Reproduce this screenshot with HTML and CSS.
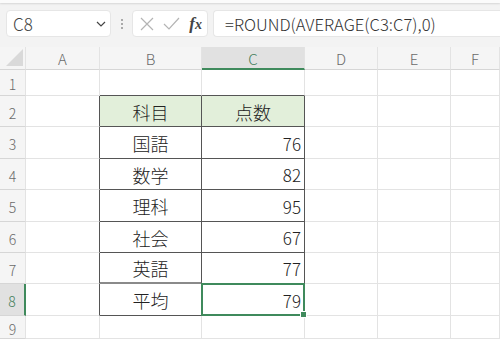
FILE: index.html
```html
<!DOCTYPE html>
<html lang="ja">
<head>
    <meta charset="UTF-8">
    <title>ROUND AVERAGE</title>
    <link rel="stylesheet" href="styles.css">
</head>
<body>
    <div class="toolbar-edge"></div>

    <!-- barra de formula -->
    <div class="formula-bar">
        <div class="name-box">
            <span>C8</span>
            <svg class="chevron" width="10" height="6" viewBox="0 0 10 6"><path d="M1 1 L5 5 L9 1" fill="none" stroke="#444" stroke-width="1.2"/></svg>
        </div>
        <div class="dots"><i></i><i></i><i></i></div>
        <div class="fx-box">
            <svg width="14" height="14" viewBox="0 0 14 14"><path d="M1 1 L13 13 M13 1 L1 13" stroke="#b4b4b4" stroke-width="1.2" fill="none"/></svg>
            <svg width="17" height="13" viewBox="0 0 17 13"><path d="M1 7 L6 12 L16 1" stroke="#b4b4b4" stroke-width="1.2" fill="none"/></svg>
            <span class="fx">f<span class="x">x</span></span>
        </div>
        <div class="formula">=ROUND(AVERAGE(C3:C7),0)</div>
    </div>

    <div class="sheet">
        <div class="hd corner"><svg width="18" height="18" viewBox="0 0 18 18"><path d="M17 0 L17 17 L0 17 Z" fill="#d9d9d9"/></svg></div>
        <div class="hd col">A</div>
        <div class="hd col">B</div>
        <div class="hd col sel">C</div>
        <div class="hd col">D</div>
        <div class="hd col">E</div>
        <div class="hd col">F</div>

        <div class="hd row">1</div>
        <div class="c"></div><div class="c top"></div><div class="c top"></div><div class="c"></div><div class="c"></div><div class="c"></div>

        <div class="hd row">2</div>
        <div class="c edge"></div><div class="c t head">科目</div><div class="c t head">点数</div><div class="c"></div><div class="c"></div><div class="c"></div>

        <div class="hd row">3</div>
        <div class="c edge"></div><div class="c t">国語</div><div class="c t num">76</div><div class="c"></div><div class="c"></div><div class="c"></div>

        <div class="hd row">4</div>
        <div class="c edge"></div><div class="c t">数学</div><div class="c t num">82</div><div class="c"></div><div class="c"></div><div class="c"></div>

        <div class="hd row">5</div>
        <div class="c edge"></div><div class="c t">理科</div><div class="c t num">95</div><div class="c"></div><div class="c"></div><div class="c"></div>

        <div class="hd row">6</div>
        <div class="c edge"></div><div class="c t">社会</div><div class="c t num">67</div><div class="c"></div><div class="c"></div><div class="c"></div>

        <div class="hd row">7</div>
        <div class="c edge"></div><div class="c t double">英語</div><div class="c t num">77</div><div class="c"></div><div class="c"></div><div class="c"></div>

        <div class="hd row sel">8</div>
        <div class="c edge"></div><div class="c t">平均</div><div class="c t num active">79</div><div class="c"></div><div class="c"></div><div class="c"></div>

        <div class="hd row">9</div>
        <div class="c"></div><div class="c"></div><div class="c"></div><div class="c"></div><div class="c"></div><div class="c"></div>
    </div>
</body>
</html>
```

FILE: styles.css
```css
* {
    margin: 0;
    padding: 0;
    box-sizing: border-box;
}

body {
    width: 500px;
    height: 339px;
    overflow: hidden;
    background: #f3f3f3;
    font-family: "Noto Sans CJK JP", "Noto Sans", sans-serif;
    font-weight: 300;
    color: #333;
}

.toolbar-edge {
    height: 3px;
    background: #fbfbfb;
    box-shadow: 0 1px 2px rgba(0,0,0,0.12);
}

/* barra de formula */
.formula-bar {
    display: flex;
    align-items: center;
    height: 27px;
    margin: 7px 0 10px 6px;
}

.name-box, .fx-box, .formula {
    height: 27px;
    background: #fff;
    border: 1px solid #e6e6e6;
    border-radius: 4px;
    display: flex;
    align-items: center;
}

.name-box {
    width: 105px;
    padding: 0 4px 0 6px;
    justify-content: space-between;
    font-size: 17px;
    color: #444;
}

.dots {
    width: 21px;
    display: flex;
    flex-direction: column;
    align-items: center;
    gap: 2px;
}

.dots i {
    width: 2px;
    height: 2px;
    background: #aaa;
}

.fx-box {
    width: 76px;
    padding: 0 5px 0 7px;
    justify-content: space-between;
}

.fx {
    font-family: "Liberation Serif", serif;
    font-style: italic;
    font-weight: bold;
    font-size: 17px;
    color: #444;
    line-height: 1;
}

.fx .x {
    font-size: 14px;
}

.formula {
    flex: 1;
    margin-left: 5px;
    margin-right: -6px;
    padding-left: 11px;
    font-size: 16.6px;
    color: #333;
    border-right: none;
    border-radius: 4px 0 0 4px;
}

/* hoja */
.sheet {
    display: grid;
    grid-template-columns: 26px 74px 102px 103px 73px 73px 49px;
    grid-template-rows: 23px 26px 31px 32px 31px 32px 31px 31px 32px 23px;
    background: #fff;
}

.hd {
    background: #f5f5f5;
    color: #6a6a6a;
    display: flex;
    align-items: center;
    justify-content: center;
    border-right: 1px solid #e3e3e3;
    border-bottom: 1px solid #d6d6d6;
}

.hd.col {
    font-size: 15px;
    padding-top: 1px;
}

.hd.row {
    font-size: 14px;
    padding-top: 3px;
}

.corner {
    align-items: flex-end;
    justify-content: flex-end;
    padding: 0 1px 2px 0;
}

.hd.col.sel {
    background: #e1e1e1;
    color: #3f7d58;
    border-bottom: 2px solid #3f8a5c;
}

.hd.row.sel {
    background: #e1e1e1;
    color: #3f7d58;
    border-right: 2px solid #3f8a5c;
}

.c {
    border-right: 1px solid #e3e3e3;
    border-bottom: 1px solid #e3e3e3;
    display: flex;
    align-items: center;
    justify-content: center;
    font-size: 18px;
    color: #222;
}

.c.top { border-bottom-color: #555; }
.c.edge { border-right-color: #555; }

.c.t {
    border-right-color: #555;
    border-bottom-color: #555;
    padding-top: 1px;
}

.c.head { background: #e2efda; }

.c.double {
    border-bottom: 2px solid #8a8a8a;
}

.c.num {
    justify-content: flex-end;
    padding-right: 3px;
    font-size: 17px;
}

.active { position: relative; }

.active::after {
    content: "";
    position: absolute;
    top: -1px;
    left: -1px;
    right: -1px;
    bottom: -1px;
    border: 2px solid #3f8a5c;
}

.active::before {
    content: "";
    position: absolute;
    right: -3px;
    bottom: -3px;
    width: 5px;
    height: 5px;
    background: #3f8a5c;
    border: 1px solid #fff;
    z-index: 1;
}
```
